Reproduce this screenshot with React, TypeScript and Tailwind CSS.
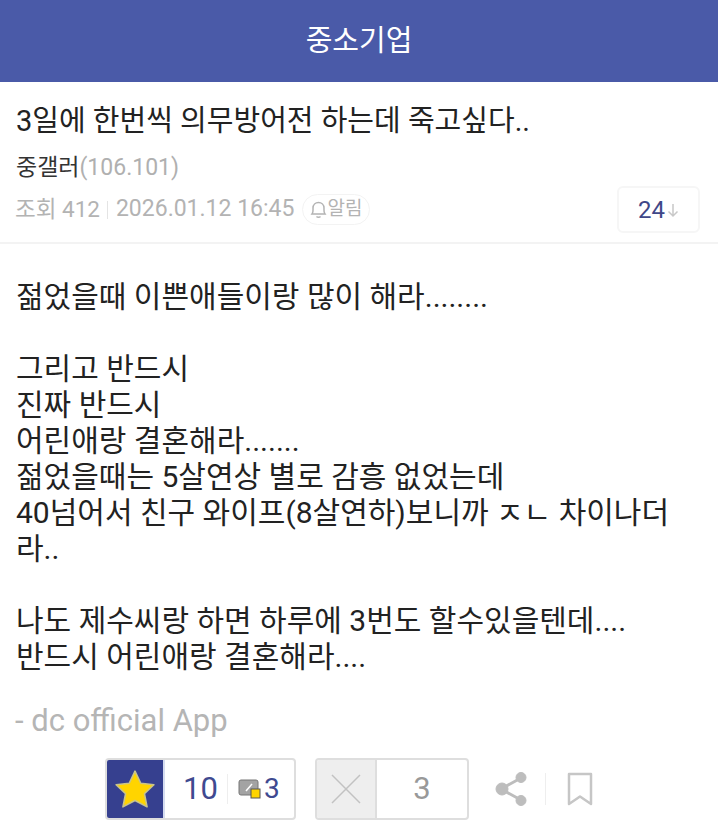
import React from 'react';

const font = { fontFamily: '"Roboto", "Noto Sans CJK KR", sans-serif' };

const bodyLines = [
  '젊었을때 이쁜애들이랑 많이 해라........',
  '',
  '그리고 반드시',
  '진짜 반드시',
  '어린애랑 결혼해라.......',
  '젊었을때는 5살연상 별로 감흥 없었는데',
  '40넘어서 친구 와이프(8살연하)보니까 ㅈㄴ 차이나더',
  '라..',
  '',
  '나도 제수씨랑 하면 하루에 3번도 할수있을텐데....',
  '반드시 어린애랑 결혼해라....',
];

export default function App() {
  return (
    <div className="w-[718px] h-[823px] overflow-hidden bg-white" style={font}>
      <header className="h-[82px] pt-[2px] bg-[#4a5aa8] flex items-center justify-center text-white text-[29px]">
        중소기업
      </header>

      <section className="h-[162px] px-[16px] pt-[20px] border-b-2 border-[#f3f3f3]">
        <h1 className="text-[29px] leading-[38px] text-[#222]">3일에 한번씩 의무방어전 하는데 죽고싶다..</h1>
        <div className="mt-[13px] text-[23px] leading-[30px] flex">
          <span className="text-[#333]">중갤러</span>
          <span className="text-[#b0b0b0]">(106.101)</span>
        </div>
        <div className="flex items-center mt-[3px] text-[22.5px] text-[#b3b3b3]">
          <span className="-ml-[1px]">조회 412</span>
          <span className="w-px h-[18px] bg-[#e4e4e4] ml-[7px] mr-[8px]" />
          <span className="text-[23px]">2026.01.12 16:45</span>
          <span className="ml-[8px] h-[31px] px-[7px] rounded-full border border-[#f3f3f3] flex items-center text-[19px]">
            <svg width="17" height="19" viewBox="0 0 17 19" fill="none" stroke="#b3b3b3" strokeWidth="1.5">
              <path d="M2 14 C3.5 12 3 10 3 8 C3 4.5 5.5 2.5 8.5 2.5 C11.5 2.5 14 4.5 14 8 C14 10 13.5 12 15 14 Z" />
              <path d="M6.5 16.5 C7.5 17.5 9.5 17.5 10.5 16.5" />
            </svg>
            알림
          </span>
          <span className="ml-auto w-[83px] h-[47px] mr-[2px] rounded-md border-2 border-[#f6f6f6] flex items-center justify-center text-[24px] text-[#3f4788]">
            24
            <svg width="12" height="16" viewBox="0 0 12 16" fill="none" stroke="#c8c8c8" strokeWidth="1.5" className="ml-[2px]">
              <path d="M6 2 V14 M1.5 9.5 L6 14 L10.5 9.5" />
            </svg>
          </span>
        </div>
      </section>

      <main className="px-[16px] pt-[35px] text-[30px] leading-[36px] text-[#222]">
        {bodyLines.map((line, i) => (
          <div key={i} className="h-[36px] whitespace-pre">{line}</div>
        ))}
        <div className="text-[#b5b5b5] mt-[28px] -ml-[1px] text-[31px] leading-[36px]">- dc official App</div>
      </main>

      <footer className="flex items-center pl-[105px] mt-[19px]">
        <div className="w-[191px] h-[62px] flex border-2 border-[#dedede] rounded-[4px] overflow-hidden">
          <div className="w-[58px] bg-[#36408f] flex items-center justify-center border-r-2 border-[#d5dcf0]">
            <svg width="42" height="40" viewBox="0 0 40 38">
              <path d="M20 2 L25.5 13.5 L38 15 L29 23.5 L31.5 36 L20 30 L8.5 36 L11 23.5 L2 15 L14.5 13.5 Z" fill="#ffd400" stroke="#c9c48a" strokeWidth="1.5" strokeLinejoin="round" />
            </svg>
          </div>
          <div className="flex-1 flex items-center text-[31px] text-[#3f4a90]">
            <span className="w-[62px] text-center pl-[9px]">10</span>
            <span className="w-px h-[30px] bg-[#eeeeee]" />
            <svg width="24" height="22" viewBox="0 0 24 22" className="ml-[10px]">
              <rect x="1" y="2" width="19" height="15" rx="2" fill="#a3a3a3" stroke="#777" />
              <path d="M8 13 L14 6" stroke="#fff" strokeWidth="1.5" />
              <rect x="13" y="11" width="9" height="9" fill="#ffd400" stroke="#555" />
            </svg>
            <span className="text-[28px] ml-[2px]">3</span>
          </div>
        </div>

        <div className="ml-[19px] w-[154px] h-[62px] flex border-2 border-[#dedede] rounded-[4px] overflow-hidden">
          <div className="w-[60px] bg-[#eeeeee] border-r-2 border-[#dedede] flex items-center justify-center">
            <svg width="32" height="32" viewBox="0 0 32 32" stroke="#c2c2c2" strokeWidth="1.5">
              <path d="M2 2 L30 30 M30 2 L2 30" />
            </svg>
          </div>
          <div className="flex-1 flex items-center justify-center text-[31px] text-[#999]">3</div>
        </div>

        <svg width="34" height="36" viewBox="0 0 34 36" className="ml-[26px]" fill="#bdbdbd" stroke="#bdbdbd">
          <path d="M6 18 L26 7 M6 18 L26 29" strokeWidth="3" />
          <circle cx="7" cy="18" r="6" />
          <circle cx="26" cy="6.5" r="5" />
          <circle cx="26" cy="29.5" r="5" />
        </svg>
        <span className="w-px h-[32px] bg-[#eeeeee] ml-[16px]" />
        <svg width="26" height="34" viewBox="0 0 26 34" fill="none" stroke="#c6c6c6" strokeWidth="2.5" className="ml-[21px]">
          <path d="M2 2 H24 V32 L13 24.5 L2 32 Z" strokeLinejoin="round" />
        </svg>
      </footer>
    </div>
  );
}
